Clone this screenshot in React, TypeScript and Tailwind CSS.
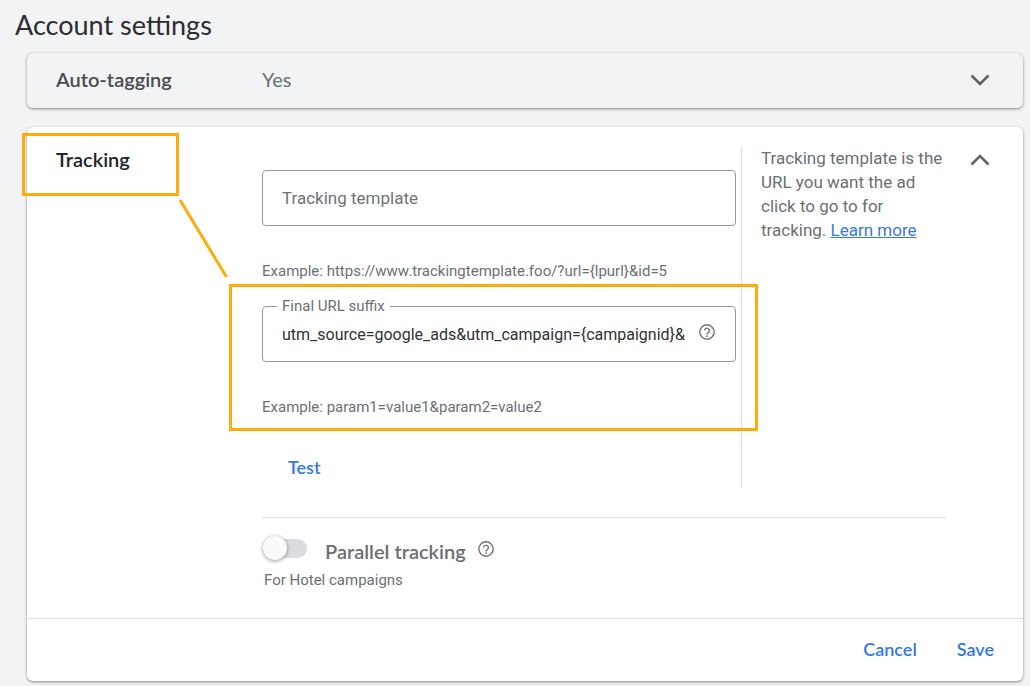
import React, { useState } from 'react';
import clsx from 'clsx';

const headingFont = "font-['Lato','Liberation_Sans',sans-serif]";

function Chevron({ up = false }: { up?: boolean }) {
  return (
    <svg width="20" height="20" viewBox="0 0 20 20" fill="none" stroke="#5f6368" strokeWidth="2.6" aria-hidden="true">
      {up ? <path d="M1.500 14.500 10 6l8.500 8.500" /> : <path d="M1.500 6.500 10 15l8.500-8.500" />}
    </svg>
  );
}

function HelpIcon() {
  return (
    <svg width="16" height="16" viewBox="0 0 16 16" fill="none" stroke="#6f7378" aria-hidden="true">
      <circle cx="8" cy="8" r="7.2" strokeWidth="1.4" />
      <path d="M5.600 6.500a2.400 2.400 0 1 1 4.100 1.700C8.800 9 8 9.300 8 10.400" strokeWidth="1.400" />
      <circle cx="8" cy="12.200" r=".85" fill="#6f7378" stroke="none" />
    </svg>
  );
}

function Switch({ id, checked, onChange }: { id: string; checked: boolean; onChange: (v: boolean) => void }) {
  return (
    <span className="relative flex h-6 w-[45px] items-center">
      <span className={clsx('ml-1 h-[19px] flex-1 rounded-full', checked ? 'bg-[#a8c7fa]' : 'bg-[#dadce0]')} />
      <span
        className={clsx(
          'absolute top-0 h-6 w-6 rounded-full bg-[#fafafa] shadow-[0_1px_4px_rgba(0,0,0,0.4)]',
          checked ? 'right-0' : 'left-px'
        )}
      />
      <input
        id={id}
        type="checkbox"
        role="switch"
        checked={checked}
        onChange={(e) => onChange(e.target.checked)}
        className="absolute inset-0 h-full w-full cursor-pointer opacity-0"
      />
    </span>
  );
}

const cardShadow = 'shadow-[0_1px_3px_rgba(0,0,0,0.45)]';

export default function App() {
  const [template, setTemplate] = useState('');
  const [suffix, setSuffix] = useState('utm_source=google_ads&utm_campaign={campaignid}&');
  const [parallel, setParallel] = useState(false);

  return (
    <div className="min-h-screen bg-[#f1f3f4] pt-[7px] pr-[7px] pb-[5px] pl-[27px] font-['Roboto','Liberation_Sans',sans-serif] text-[17px] text-[#6b6f74]">
      <h1 className={clsx(headingFont, '-ml-3 text-[27px] leading-9 text-[#2b2d30]')}>Account settings</h1>

      {/* Auto-tagging */}
      <section className={clsx('mt-2.5 flex h-[55px] items-center rounded-md pr-[33px] pb-[3px] pl-[29px]', cardShadow)}>
        <h2 className={clsx(headingFont, 'w-[206px] text-xl font-semibold text-[#494c50]')}>Auto-tagging</h2>
        <span className={clsx(headingFont, 'flex-1 text-xl')}>Yes</span>
        <button type="button" aria-label="Expand auto-tagging">
          <Chevron />
        </button>
      </section>

      {/* Tracking */}
      <section className={clsx('relative mt-[19px] rounded-md bg-white', cardShadow)}>
        <div className="flex items-start pt-[19px] pr-[33px] pb-[26px] pl-[29px]">
          <div className="w-[206px] shrink-0">
            <h2 className={clsx(headingFont, 'text-xl leading-[26px] font-semibold text-[#222427]')}>Tracking</h2>
          </div>

          <div className="min-w-0 flex-1">
            <div className="flex gap-[5px]">
              <div className="min-w-0 flex-1 pt-6 pb-0.5">
                <input
                  type="text"
                  aria-label="Tracking template"
                  placeholder="Tracking template"
                  value={template}
                  onChange={(e) => setTemplate(e.target.value)}
                  className="block h-14 w-full rounded border border-[#94989d] px-[19px] text-[#3c4043] placeholder:text-[#6f7378]"
                />
                <p className="mt-[35px] text-[15px] leading-5">
                  Example: https://www.trackingtemplate.foo/?url={'{lpurl}'}&amp;id=5
                </p>

                <div className="relative mt-[25px]">
                  <div className="relative flex h-14 items-center rounded border border-[#94989d] pr-5 pl-[19px]">
                    <label htmlFor="suffix" className="absolute -top-[11px] left-3.5 bg-white px-[5px] text-[15px] leading-5">
                      Final URL suffix
                    </label>
                    <input
                      id="suffix"
                      type="text"
                      value={suffix}
                      onChange={(e) => setSuffix(e.target.value)}
                      className="h-full min-w-0 flex-1 text-base text-[#303236] outline-none"
                    />
                    <button type="button" aria-label="About final URL suffix" className="pb-1">
                      <HelpIcon />
                    </button>
                  </div>
                  <p className="mt-[35px] text-[15px] leading-5">Example: param1=value1&amp;param2=value2</p>
                  <div className="pointer-events-none absolute -top-[22px] -right-[22px] -bottom-3.5 -left-[33px] border-[3px] border-[#ffab0a]" />
                </div>

                <button type="button" className={clsx(headingFont, 'mt-[33px] h-9 px-[26px] pb-0.5 text-lg font-semibold text-[#3578e5]')}>
                  Test
                </button>
              </div>

              <aside className="w-[205px] shrink-0 border-l border-[#dedfe1] pl-[19px] leading-6">
                Tracking template is the URL you want the ad click to go to for tracking.{' '}
                <a href="#learn" className="text-[#3578e5] underline">Learn more</a>
              </aside>
            </div>

            <div className="mt-[29px] border-t border-[#dedfe1] pt-[18px]">
              <div className="flex items-start">
                <Switch id="parallel" checked={parallel} onChange={setParallel} />
                <label htmlFor="parallel" className={clsx(headingFont, 'ml-[18px] text-xl leading-[30px] font-semibold')}>
                  Parallel tracking
                </label>
                <button type="button" aria-label="About parallel tracking" className="mt-[5px] ml-3">
                  <HelpIcon />
                </button>
              </div>
              <p className="mt-0.5 pl-0.5 text-[15px] leading-6">For Hotel campaigns</p>
            </div>
          </div>

          <button type="button" aria-label="Collapse tracking" className="mt-1 ml-6">
            <Chevron up />
          </button>
        </div>

        <div className="flex justify-end gap-10 border-t border-[#dedfe1] py-[13px] pr-[29px]">
          <button type="button" className={clsx(headingFont, 'h-9 pb-0.5 text-lg font-semibold text-[#3578e5]')}>Cancel</button>
          <button type="button" className={clsx(headingFont, 'h-9 pb-0.5 text-lg font-semibold text-[#3578e5]')}>Save</button>
        </div>

        {/* Callout around the heading and its connector */}
        <div className="pointer-events-none absolute top-1.5 -left-[5px] h-[63px] w-[157px] border-[3px] border-[#ffab0a]" />
        <svg className="pointer-events-none absolute top-[72px] left-[151px]" width="50" height="80" viewBox="0 0 50 80" aria-hidden="true">
          <path d="M2 1 48.500 78" stroke="#ffab0a" strokeWidth="3" />
        </svg>
      </section>
    </div>
  );
}
